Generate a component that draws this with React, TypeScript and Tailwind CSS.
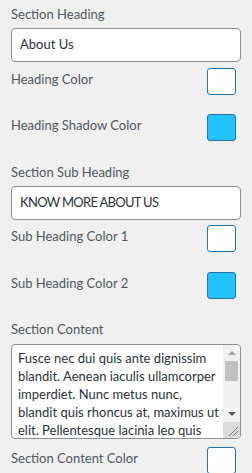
import React from "react";

function Label({ children }: { children: React.ReactNode }) {
  return <div className="text-[13px] leading-[20px] text-[#50575e]">{children}</div>;
}

function ColorRow({ label, swatch, className }: { label: string; swatch: string; className: string }) {
  return (
    <div className={"flex items-start justify-between pr-[16px] " + className}>
      <div className="pt-[1px]">
        <Label>{label}</Label>
      </div>
      <div className={"h-[27px] w-[29px] rounded-[3px] border border-[#2271b1] " + swatch} />
    </div>
  );
}

function TextInput({ value, textClass }: { value: string; textClass?: string }) {
  return (
    <div
      className={
        "mt-[4px] flex h-[34px] w-[230px] items-center rounded-[4px] border border-[#8c8f94] bg-white px-[8px] text-[13px] text-[#2c3338] " +
        (textClass || "")
      }
    >
      {value}
    </div>
  );
}

function FakeTextarea() {
  const lines = [
    "Fusce nec dui quis ante dignissim",
    "blandit. Aenean iaculis ullamcorper",
    "imperdiet. Nunc metus nunc,",
    "blandit quis rhoncus at, maximus ut",
    "elit. Pellentesque lacinia leo quis",
  ];
  return (
    <div className="mt-[5px] flex h-[95px] w-[230px] overflow-hidden rounded-[4px] border border-[#8c8f94] bg-white">
      <div className="flex-1 overflow-hidden whitespace-nowrap pl-[6px] pt-[4px] text-[13px] leading-[18px] text-[#2c3338]">
        {lines.map((l) => (
          <div key={l}>{l}</div>
        ))}
      </div>
      {/* scrollbar + resize grip */}
      <div className="flex w-[17px] flex-col bg-[#f1f1f1]">
        <div className="flex h-[16px] items-center justify-center">
          <div className="h-0 w-0 border-x-[4px] border-b-[4px] border-x-transparent border-b-[#a3a3a3]" />
        </div>
        <div className="mx-[2px] h-[20px] bg-[#c1c1c1]" />
        <div className="flex-1" />
        <div className="flex h-[16px] items-center justify-center">
          <div className="h-0 w-0 border-x-[4px] border-t-[4px] border-x-transparent border-t-[#505050]" />
        </div>
        <div className="h-[16px] bg-[#dcdcdc]">
          <svg width="17" height="16" viewBox="0 0 17 16">
            <line x1="6" y1="14" x2="15" y2="5" stroke="#7a7a7a" strokeWidth="1" />
            <line x1="10" y1="14" x2="15" y2="9" stroke="#7a7a7a" strokeWidth="1" />
          </svg>
        </div>
      </div>
    </div>
  );
}

export default function App() {
  return (
    <div className="h-[473px] w-[252px] overflow-hidden bg-[#f0f0f1] pl-[11px] font-['Lato','Noto_Sans',sans-serif]">
      <div className="pt-[4px]">
        <Label>Section Heading</Label>
      </div>
      <TextInput value="About Us" />
      <ColorRow className="mt-[6px]" label="Heading Color" swatch="bg-white" />
      <ColorRow className="mt-[19px]" label="Heading Shadow Color" swatch="bg-[#22c4fb]" />

      <div className="mt-[21px]">
        <Label>Section Sub Heading</Label>
      </div>
      <TextInput value="KNOW MORE ABOUT US" textClass="tracking-[-0.7px]" />
      <ColorRow className="mt-[5px]" label="Sub Heading Color 1" swatch="bg-white" />
      <ColorRow className="mt-[20px]" label="Sub Heading Color 2" swatch="bg-[#22c4fb]" />

      <div className="mt-[20px]">
        <Label>Section Content</Label>
      </div>
      <FakeTextarea />
      <ColorRow className="mt-[8px]" label="Section Content Color" swatch="bg-white" />
    </div>
  );
}
